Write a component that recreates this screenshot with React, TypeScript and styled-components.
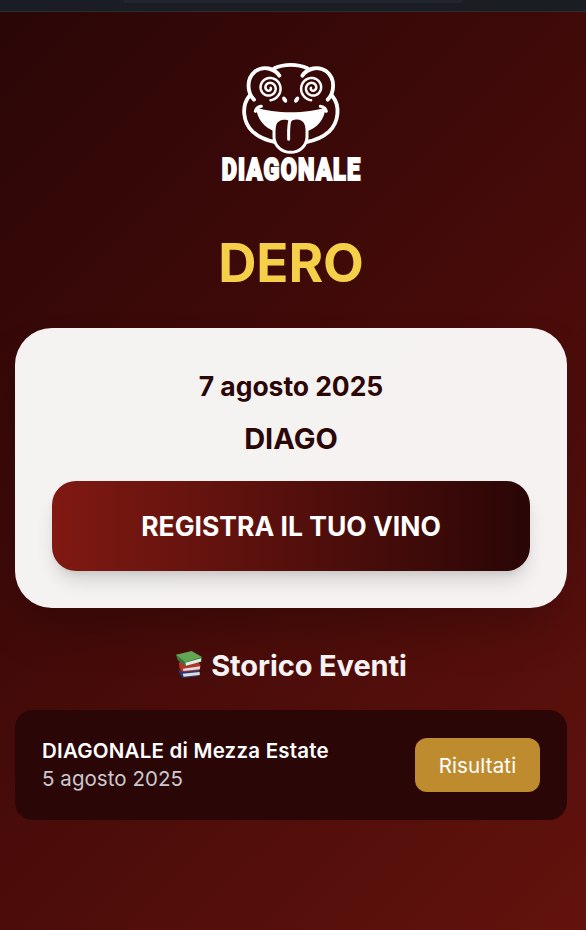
import React from 'react';
import styled, { createGlobalStyle } from 'styled-components';

const GlobalStyle = createGlobalStyle`
  *, *::before, *::after { box-sizing: border-box; }
  body {
    margin: 0;
    background: #2a0606;
    font-family: Inter, "Liberation Sans", sans-serif;
  }
`;

const Page = styled.div`
  display: flex;
  flex-direction: column;
  height: 930px;
  overflow: hidden;
`;

const BrowserBar = styled.header`
  flex: none;
  display: flex;
  justify-content: center;
  height: 12px;
  background: #1a1d24;
  border-bottom: 1px solid #2b2c31;
`;

const AddressField = styled.div`
  width: 340px;
  height: 3px;
  background: #22252d;
  border-radius: 0 0 5px 5px;
`;

const Main = styled.main`
  flex: 1;
  display: flex;
  flex-direction: column;
  align-items: center;
  padding: 38px 19px 0 15px;
  background: linear-gradient(135deg, #2a0606 0%, #450b09 50%, #62120c 100%);
`;

const Logo = styled.svg`
  display: block;
  width: 160px;
  height: 145px;
  margin-right: 2px;
  flex: none;
  overflow: visible;
`;

const Title = styled.h1`
  margin: 36px 0 0;
  font-size: 53px;
  line-height: 64px;
  font-weight: 700;
  letter-spacing: -0.1px;
  color: #f4cf47;
`;

const EventCard = styled.section`
  width: 100%;
  height: 280px;
  margin-top: 33px;
  padding: 39px 37px 0;
  display: flex;
  flex-direction: column;
  align-items: center;
  border-radius: 37px;
  background: linear-gradient(135deg, #f4f3f1 0%, #f4f3f1 49.9%, #f6f2f1 50.1%, #f6f2f1 100%);
  box-shadow: 0 25px 50px -12px rgba(0, 0, 0, 0.25);
  color: #2b0707;
`;

const EventDate = styled.p`
  margin: 0;
  font-size: 26.5px;
  line-height: 38px;
  font-weight: 700;
  letter-spacing: -0.05px;
`;

const EventName = styled.h2`
  margin: 15px 0 0;
  font-size: 29px;
  line-height: 38px;
  font-weight: 700;
`;

const RegisterButton = styled.button`
  width: 100%;
  height: 90px;
  margin-top: 23px;
  padding: 0;
  border: 0;
  border-radius: 24px;
  background: linear-gradient(90deg, #801912, #2a0606);
  box-shadow: 0 13px 20px -4px rgba(0, 0, 0, 0.14), 0 5px 8px -4px rgba(0, 0, 0, 0.1);
  color: #fff;
  font: 700 26.5px/36px Inter, "Liberation Sans", sans-serif;
  letter-spacing: 0;
`;

const HistoryHeading = styled.h2`
  display: flex;
  align-items: center;
  gap: 8px;
  margin: 39px 0 0;
  font-size: 29px;
  line-height: 38px;
  font-weight: 700;
  letter-spacing: -0.1px;
  color: #f6f2f3;
`;

const BooksIcon = styled.svg`
  width: 28px;
  height: 28px;
  overflow: visible;
`;

const HistoryRow = styled.article`
  width: 100%;
  height: 110px;
  margin-top: 25px;
  padding: 0 27px;
  display: flex;
  align-items: center;
  justify-content: space-between;
  border-radius: 18px;
  background: #2a0607;
`;

const RowTitle = styled.h3`
  margin: 0;
  font-size: 20.5px;
  line-height: 28px;
  font-weight: 600;
  letter-spacing: 0.22px;
  color: #fff;
`;

const RowDate = styled.p`
  margin: 0;
  font-size: 20.5px;
  line-height: 28px;
  letter-spacing: 0.05px;
  color: #cbc9cf;
`;

const ResultsButton = styled.button`
  width: 125px;
  height: 54px;
  padding: 1px 0 0;
  border: 0;
  border-radius: 12px;
  background: #be8c2f;
  color: #fff;
  font: 400 20.5px/28px Inter, "Liberation Sans", sans-serif;
  letter-spacing: 0.15px;
`;

const spiral = (cx: number, cy: number, dir: number) => {
  const turns = 2.25;
  const steps = 110;
  let d = '';
  for (let i = 0; i <= steps; i++) {
    const t = i / steps;
    const angle = Math.PI / 2 - dir * (t * turns * 2 * Math.PI + 0.1);
    const r = 37 - 33 * t;
    d += `${i ? 'L' : 'M'}${(cx + r * Math.cos(angle)).toFixed(1)} ${(cy + r * Math.sin(angle)).toFixed(1)}`;
  }
  return d;
};

const FrogLogo = () => (
  <Logo viewBox="0 0 480 435" role="img" aria-label="Diagonale">
    <g fill="none" stroke="#fff" strokeWidth="11.5" strokeLinecap="round" strokeLinejoin="round">
      <path d="M208 77C193 55 160 46 136 64C108 86 111 127 132 149" />
      <path d="M277 77C292 55 325 46 349 64C377 86 374 127 353 149" />
      <path d="M193 55C222 41 263 41 292 55" />
      <path d="M118 138C94 167 98 216 128 245C148 263 173 272 196 276" />
      <path d="M367 138C391 167 387 216 357 245C337 263 312 272 289 276" />
      <path d="M136 184C138 175 145 170 154 169M349 184C347 175 340 170 331 169" strokeWidth="9" />
      <g strokeWidth="7.5">
        <path d={spiral(178, 114, 1)} />
        <path d={spiral(307, 114, -1)} />
      </g>
    </g>
    <path fill="#fff" d="M138 172C190 192 295 192 347 172C344 207 323 235 288 245H197C163 235 141 207 138 172Z" />
    <path
      fill="#3a0908"
      stroke="#fff"
      strokeWidth="9"
      d="M192 242C192 218 204 205 222 204C231 204 237 206 241 210C246 205 254 203 262 204C283 205 292 220 291 245V262C289 290 267 307 242 307C217 307 194 290 192 262Z"
    />
    <path d="M241 208C234 226 236 245 236 268" fill="none" stroke="#fff" strokeWidth="9" strokeLinecap="round" />
    <g fill="#fff">
      <ellipse cx="224" cy="149" rx="6" ry="10" transform="rotate(-32 224 149)" />
      <ellipse cx="260" cy="149" rx="6" ry="10" transform="rotate(32 260 149)" />
    </g>
    <text
      x="35"
      y="391"
      textLength="419"
      lengthAdjust="spacingAndGlyphs"
      fill="#fff"
      stroke="#fff"
      strokeWidth="6"
      fontFamily='Roboto, "Liberation Sans", sans-serif'
      fontWeight="900"
      fontSize="96"
      letterSpacing="5"
    >
      DIAGONALE
    </text>
  </Logo>
);

const Books = () => (
  <BooksIcon viewBox="0 0 84 84" aria-hidden="true">
    <path fill="#29396f" d="M11 54L66 50L74 57L73 72L26 78Q14 72 11 54Z" />
    <path fill="#dadce6" d="M23 65L74 60V69L26 74Z" />
    <path fill="#b53427" d="M13 30L68 30L76 38L74 55L22 60Q10 50 13 30Z" />
    <path fill="#dedfe5" d="M24 50L76 43L74 52L25 57Z" />
    <path fill="#39723b" d="M3 8L8 24L30 42L80 29V15Z" />
    <path fill="#e8e9e6" d="M31 32L79 19L77 29L33 41Z" />
    <path fill="#62a553" d="M3 8L50 -3L81 15L31 31Z" />
  </BooksIcon>
);

export default function App() {
  return (
    <>
      <GlobalStyle />
      <Page>
        <BrowserBar>
          <AddressField />
        </BrowserBar>
        <Main>
          <FrogLogo />
          <Title>DERO</Title>
          <EventCard>
            <EventDate>7 agosto 2025</EventDate>
            <EventName>DIAGO</EventName>
            <RegisterButton>REGISTRA IL TUO VINO</RegisterButton>
          </EventCard>
          <HistoryHeading>
            <Books />
            <span>Storico Eventi</span>
          </HistoryHeading>
          <HistoryRow>
            <div>
              <RowTitle>DIAGONALE di Mezza Estate</RowTitle>
              <RowDate>5 agosto 2025</RowDate>
            </div>
            <ResultsButton>Risultati</ResultsButton>
          </HistoryRow>
        </Main>
      </Page>
    </>
  );
}
